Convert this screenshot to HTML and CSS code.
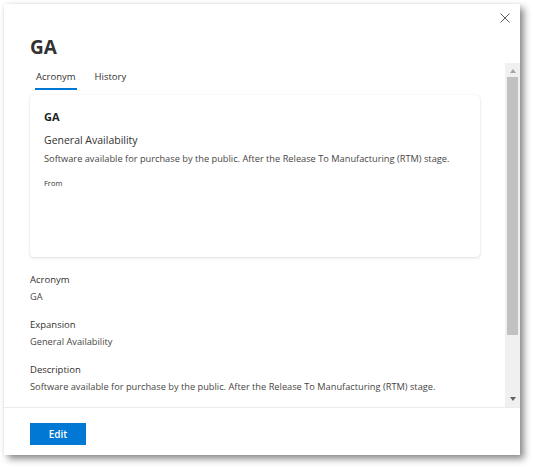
FILE: index.html
```html
<!DOCTYPE html>
<html>
<head>
<meta charset="utf-8">
<link rel="stylesheet" href="styles.css">
</head>
<body>
<div class="panel">
  <div class="header">
    <h1 class="title">GA</h1>
    <button class="close" aria-label="Close">
      <svg width="10" height="10" viewBox="0 0 10 10"><path d="M0.5 0.5 L9.5 9.5 M9.5 0.5 L0.5 9.5" stroke="#605e5c" stroke-width="1" fill="none"/></svg>
    </button>
  </div>
  <div class="scroller">
    <div class="content">
      <div class="tabs">
        <div class="tab active">Acronym</div>
        <div class="tab">History</div>
      </div>
      <div class="card">
        <div class="card-title">GA</div>
        <div class="card-sub">General Availability</div>
        <div class="card-desc">Software available for purchase by the public. After the Release To Manufacturing (RTM) stage.</div>
        <div class="card-from">From</div>
      </div>
      <div class="field first">
        <div class="label">Acronym</div>
        <div class="value">GA</div>
      </div>
      <div class="field">
        <div class="label">Expansion</div>
        <div class="value">General Availability</div>
      </div>
      <div class="field">
        <div class="label">Description</div>
        <div class="value">Software available for purchase by the public. After the Release To Manufacturing (RTM) stage.</div>
      </div>
    </div>
    <div class="scrollbar">
      <div class="arrow up"></div>
      <div class="track"><div class="thumb"></div></div>
      <div class="arrow down"></div>
    </div>
  </div>
  <div class="footer">
    <button class="edit">Edit</button>
  </div>
</div>
</body>
</html>
```
FILE: styles.css
```css
* { box-sizing: border-box; }
html, body { margin: 0; padding: 0; background: #ffffff; }
body {
  font-family: "Open Sans", "Segoe UI", sans-serif;
  color: #323130;
  width: 533px;
  height: 467px;
  overflow: hidden;
}
.panel {
  margin: 4px 0 0 4px;
  width: 516px;
  height: 451px;
  background: #ffffff;
  display: flex;
  flex-direction: column;
  box-shadow: 4px 4px 7px rgba(0,0,0,0.45), 0 0 3px rgba(0,0,0,0.08);
}
.header {
  height: 59px;
  display: flex;
  justify-content: space-between;
  align-items: flex-start;
  padding: 0 10px 0 26px;
  flex: none;
}
.title {
  margin: 29px 0 0 0;
  font-size: 19px;
  line-height: 28px;
  font-weight: 700;
  color: #323130;
}
.close {
  margin-top: 9px;
  width: 10px;
  height: 10px;
  padding: 0;
  border: 0;
  background: none;
  display: flex;
}
.scroller {
  height: 344px;
  display: flex;
  flex: none;
}
.content {
  flex: 1;
  overflow: hidden;
  padding: 6px 25px 0 26px;
}
.tabs {
  display: flex;
  gap: 17px;
  padding-left: 5px;
}
.tab {
  font-size: 9.5px;
  line-height: 16px;
  color: #323130;
  padding: 0 1px 5px 1px;
  position: relative;
}
.tab.active::after {
  content: "";
  position: absolute;
  left: 0;
  right: 0;
  bottom: 0;
  height: 2px;
  background: #0078d4;
}
.card {
  margin-top: 5px;
  height: 162px;
  border-radius: 4px;
  background: #fff;
  box-shadow: 0 1px 3px rgba(0,0,0,0.13), 0 0 1px rgba(0,0,0,0.11);
  padding: 14px 15px 0 14px;
}
.card-title {
  font-size: 11px;
  font-weight: 700;
  line-height: 16px;
  color: #201f1e;
}
.card-sub {
  margin-top: 7px;
  font-size: 10.5px;
  line-height: 16px;
  color: #323130;
}
.card-desc {
  margin-top: 3px;
  font-size: 9.25px;
  line-height: 16px;
  color: #484644;
  white-space: nowrap;
}
.card-from {
  margin-top: 10px;
  font-size: 7.5px;
  line-height: 12px;
  color: #323130;
}
.field {
  margin-top: 12px;
}
.field.first { margin-top: 15px; }
.label {
  font-size: 9.5px;
  line-height: 16px;
  color: #323130;
}
.value {
  margin-top: 1px;
  font-size: 9.25px;
  line-height: 16px;
  color: #484644;
  white-space: nowrap;
}
.scrollbar {
  width: 15px;
  flex: none;
  background: #f0f0f0;
  display: flex;
  flex-direction: column;
  align-items: center;
}
.arrow {
  width: 0;
  height: 0;
  border-left: 3.5px solid transparent;
  border-right: 3.5px solid transparent;
  flex: none;
}
.arrow.up {
  margin-top: 6px;
  border-bottom: 4px solid #a3a3a3;
}
.arrow.down {
  margin-bottom: 6px;
  border-top: 4px solid #606060;
}
.track {
  flex: 1;
  width: 100%;
  padding: 4px 2px 0 2px;
}
.thumb {
  width: 100%;
  height: 258px;
  background: #c1c1c1;
}
.footer {
  flex: 1;
  border-top: 1px solid #edebe9;
  padding: 13px 0 0 26px;
}
.edit {
  width: 56px;
  height: 22px;
  border: 1px solid #0078d4;
  background: #0078d4;
  color: #ffffff;
  font-family: "Open Sans", "Segoe UI", sans-serif;
  font-weight: 600;
  font-size: 10px;
  padding: 0;
}
```
